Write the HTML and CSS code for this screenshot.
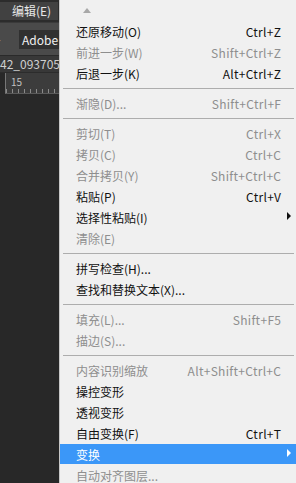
FILE: index.html
```html
<!DOCTYPE html>
<html>
<head>
<meta charset="utf-8">
<link rel="stylesheet" href="styles.css">
</head>
<body>
<div class="app">
  <div class="side">
    <div class="menubar"><div class="mbtn">编辑(E)</div></div>
    <div class="options">
      <span class="caret">▸</span>
      <div class="fontbox">Adobe .</div>
    </div>
    <div class="tabrow">42_093705(</div>
    <div class="ruler">
      <span class="rnum">15</span>
      <div class="ticks"></div>
    </div>
    <div class="canvas"></div>
  </div>
  <div class="menu">
    <div class="up"><span class="uptri"></span></div>
    <div class="item"><span class="lbl">还原移动(O)</span><span class="key">Ctrl+Z</span></div>
    <div class="item dis"><span class="lbl">前进一步(W)</span><span class="key">Shift+Ctrl+Z</span></div>
    <div class="item"><span class="lbl">后退一步(K)</span><span class="key">Alt+Ctrl+Z</span></div>
    <div class="sep"></div>
    <div class="item dis"><span class="lbl">渐隐(D)...</span><span class="key">Shift+Ctrl+F</span></div>
    <div class="sep"></div>
    <div class="item dis"><span class="lbl">剪切(T)</span><span class="key">Ctrl+X</span></div>
    <div class="item dis"><span class="lbl">拷贝(C)</span><span class="key">Ctrl+C</span></div>
    <div class="item dis"><span class="lbl">合并拷贝(Y)</span><span class="key">Shift+Ctrl+C</span></div>
    <div class="item"><span class="lbl">粘贴(P)</span><span class="key">Ctrl+V</span></div>
    <div class="item sub"><span class="lbl">选择性粘贴(I)</span><span class="arrow"></span></div>
    <div class="item dis"><span class="lbl">清除(E)</span></div>
    <div class="sep"></div>
    <div class="item"><span class="lbl">拼写检查(H)...</span></div>
    <div class="item"><span class="lbl">查找和替换文本(X)...</span></div>
    <div class="sep"></div>
    <div class="item dis"><span class="lbl">填充(L)...</span><span class="key">Shift+F5</span></div>
    <div class="item dis"><span class="lbl">描边(S)...</span></div>
    <div class="sep"></div>
    <div class="item dis"><span class="lbl">内容识别缩放</span><span class="key">Alt+Shift+Ctrl+C</span></div>
    <div class="item"><span class="lbl">操控变形</span></div>
    <div class="item"><span class="lbl">透视变形</span></div>
    <div class="item"><span class="lbl">自由变换(F)</span><span class="key">Ctrl+T</span></div>
    <div class="item sub hl"><span class="lbl">变换</span><span class="arrow"></span></div>
    <div class="item dis"><span class="lbl">自动对齐图层...</span></div>
  </div>
</div>
</body>
</html>
```

FILE: styles.css
```css
html, body {
  margin: 0;
  padding: 0;
  width: 296px;
  height: 483px;
  overflow: hidden;
  background: #282828;
  font-family: "Noto Sans CJK SC", "Noto Sans", sans-serif;
}

.app {
  display: flex;
  width: 296px;
  height: 483px;
}

.side {
  width: 59px;
  flex: none;
  display: flex;
  flex-direction: column;
  overflow: hidden;
  background: #282828;
}

.menubar {
  height: 22px;
  background: #2c2c2c;
  display: flex;
  align-items: flex-start;
  padding-top: 2px;
  box-sizing: border-box;
}

.mbtn {
  width: 58px;
  height: 18px;
  background: #414141;
  color: #e8e8e8;
  font-size: 12px;
  line-height: 18px;
  padding-left: 12px;
  box-sizing: border-box;
  white-space: nowrap;
}

.options {
  height: 34px;
  background: #4a4a4a;
  border-top: 1px solid #3a3a3a;
  border-bottom: 1px solid #2a2a2a;
  box-sizing: border-box;
  display: flex;
  align-items: center;
  gap: 13px;
}

.caret {
  color: #cfcfcf;
  font-size: 9px;
  margin-left: -4px;
  width: 10px;
}

.fontbox {
  height: 19px;
  flex: 1;
  background: #303030;
  color: #f0f0f0;
  font-size: 12px;
  line-height: 19px;
  padding-left: 3px;
  white-space: nowrap;
  overflow: hidden;
}

.tabrow {
  height: 16px;
  background: #383838;
  color: #cfcfcf;
  font-size: 12px;
  line-height: 16px;
  white-space: nowrap;
  overflow: hidden;
  border-bottom: 1px solid #2c2c2c;
}

.ruler {
  height: 20px;
  background: #3c3c3c;
  position: relative;
  border-left: 1px solid #777;
  margin-left: 5px;
  border-bottom: 1px solid #5a5a5a;
}

.rnum {
  position: absolute;
  left: 5px;
  top: 3px;
  font-size: 10px;
  color: #c0c0c0;
  line-height: 12px;
}

.ticks {
  position: absolute;
  left: 0;
  right: 0;
  bottom: 0;
  height: 4px;
  background: repeating-linear-gradient(90deg, #8a8a8a 0 1px, transparent 1px 6px);
}

.canvas {
  flex: 1;
  background: #282828;
}

.menu {
  flex: 1;
  background: #f0f0f0;
  border-left: 1px solid #c8c8c8;
  display: flex;
  flex-direction: column;
  font-size: 12px;
  color: #111;
}

.up {
  height: 21px;
  flex: none;
  position: relative;
}

.uptri {
  position: absolute;
  left: 23px;
  top: 8px;
  width: 0;
  height: 0;
  border-left: 4.5px solid transparent;
  border-right: 4.5px solid transparent;
  border-bottom: 5px solid #a8a8a8;
}

.item {
  height: 21px;
  flex: none;
  display: flex;
  align-items: center;
  justify-content: space-between;
  padding: 0 15px 0 16px;
  white-space: nowrap;
  line-height: 21px;
}

.key {
  letter-spacing: 0.3px;
  margin-right: -0.3px;
}

.item.dis {
  color: #8e8e8e;
}

.item.sub {
  padding-right: 5px;
}

.item.hl {
  background: #3b97f8;
  color: #fff;
  height: 20px;
  margin-bottom: 1px;
}

.arrow {
  width: 0;
  height: 0;
  border-top: 4px solid transparent;
  border-bottom: 4px solid transparent;
  border-left: 4px solid #111;
  margin-top: -3px;
}

.hl .arrow {
  border-left-color: #fff;
}

.sep {
  height: 9px;
  flex: none;
  display: flex;
  align-items: center;
  padding-left: 3px;
  padding-right: 2px;
}

.sep::before {
  content: "";
  flex: 1;
  height: 1px;
  background: #adadad;
}
```
